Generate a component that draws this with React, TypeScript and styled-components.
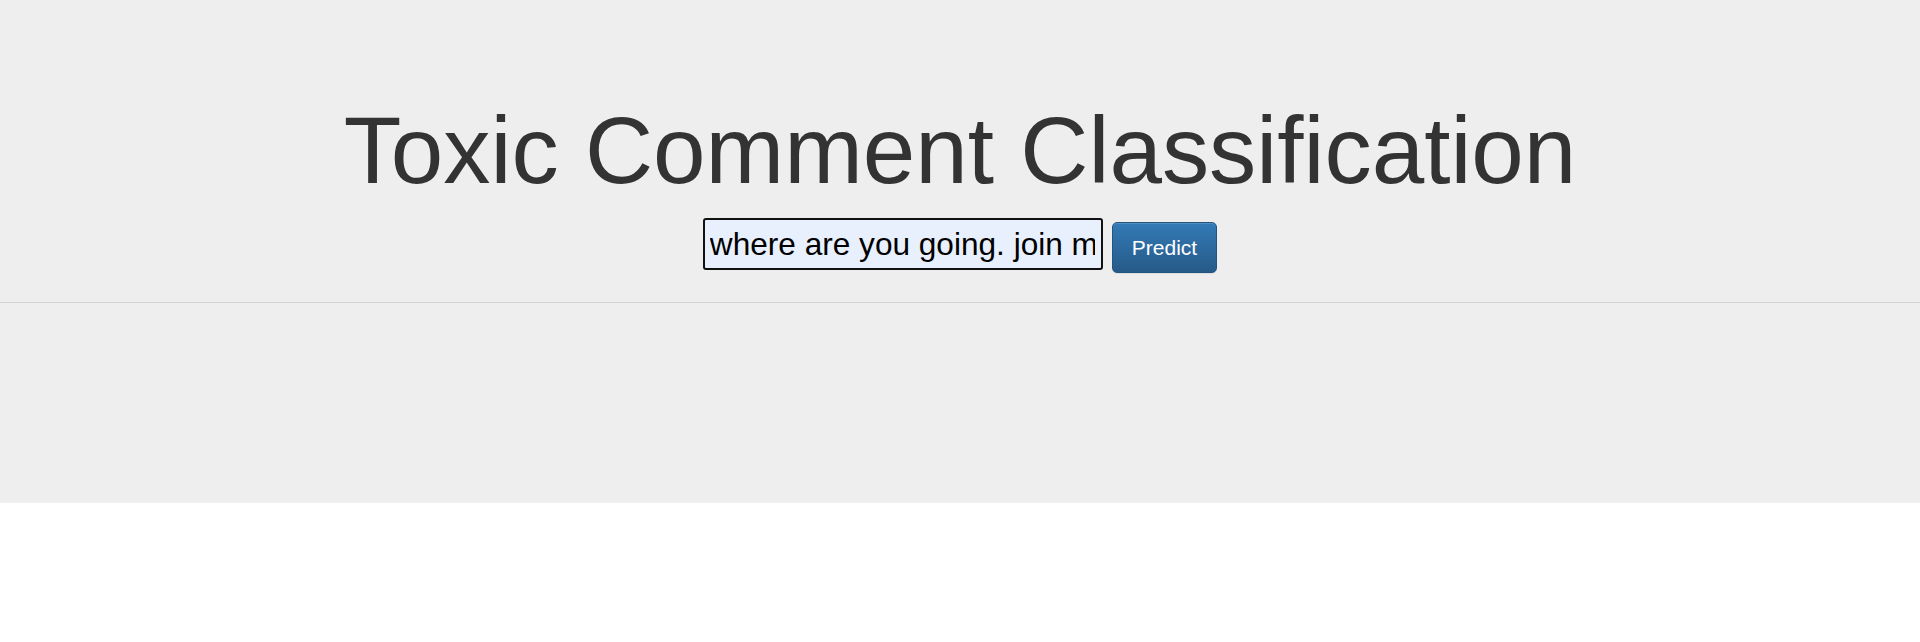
import React from "react";
import styled, { createGlobalStyle } from "styled-components";

const GlobalStyle = createGlobalStyle`
  html, body {
    margin: 0;
    padding: 0;
    background: #ffffff;
    font-family: "Liberation Sans", Arial, Helvetica, sans-serif;
    color: #333333;
  }
  * { box-sizing: border-box; }
`;

const Jumbotron = styled.section`
  background: #eeeeee;
  height: 503px;
  padding-top: 99px;
  display: flex;
  flex-direction: column;
  align-items: stretch;
`;

const Title = styled.h1`
  margin: 0;
  font-family: "Liberation Sans", Arial, Helvetica, sans-serif;
  font-weight: 400;
  font-size: 94.4px;
  line-height: 104.6px;
  color: #333333;
  text-align: center;
`;

const PredictForm = styled.form`
  display: flex;
  justify-content: center;
  align-items: flex-start;
  gap: 9px;
  margin: 14.4px 0 0 0;
`;

const CommentInput = styled.input`
  width: 400px;
  height: 52px;
  padding: 1px 6px 0 5px;
  border: 2px solid #111111;
  border-radius: 3px;
  background: #e8f0fe;
  color: #000000;
  font-family: "Liberation Sans", Arial, Helvetica, sans-serif;
  font-size: 31.6px;
  outline: none;
`;

const PredictButton = styled.button`
  margin-top: 4px;
  height: 51px;
  padding: 0 19px;
  border: 1px solid #245580;
  border-radius: 5px;
  background-image: linear-gradient(to bottom, #337ab7 0%, #265a88 100%);
  color: #ffffff;
  font-family: "Liberation Sans", Arial, Helvetica, sans-serif;
  font-size: 21px;
  line-height: 1;
  cursor: pointer;
  box-shadow: inset 0 1px 0 rgba(255, 255, 255, 0.15), 0 1px 1px rgba(0, 0, 0, 0.075);
`;

const Divider = styled.hr`
  margin: 29px 0 0;
  border: 0;
  border-top: 1px solid #d4d4d4;
  height: 0;
`;

export default function App() {
  return (
    <>
      <GlobalStyle />
      <Jumbotron>
        <Title>Toxic Comment Classification</Title>
        <PredictForm onSubmit={(e) => e.preventDefault()}>
          <CommentInput
            type="text"
            defaultValue="where are you going. join me"
          />
          <PredictButton type="submit">Predict</PredictButton>
        </PredictForm>
        <Divider />
      </Jumbotron>
    </>
  );
}
